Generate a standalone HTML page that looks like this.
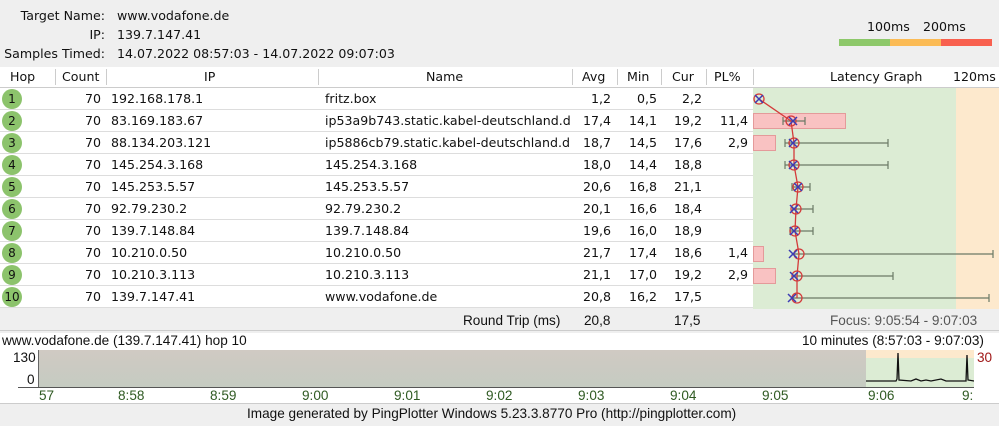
<!DOCTYPE html>
<html><head><meta charset="utf-8"><style>
*{margin:0;padding:0;box-sizing:border-box}
body{width:999px;height:426px;background:#efefef;font-family:"DejaVu Sans",Verdana,sans-serif;font-size:12.6px;color:#111;position:relative;overflow:hidden}
.a{position:absolute;white-space:nowrap}
.r{text-align:right}
.hdr{position:absolute;left:0;top:67px;width:999px;height:21px;background:#fff;border-bottom:1px solid #ccc}
.row{position:absolute;left:0;width:753px;height:22px;background:#fff;border-bottom:1px solid #ddd}
.row span{position:absolute;top:3px;white-space:nowrap}
.c{position:absolute;left:2px;top:1px;width:20px;height:20px;border-radius:50%;background:#8cc36c;text-align:center;line-height:20px;font-size:12px}
.n{font-family:"Liberation Sans",sans-serif;font-size:14px;transform:scaleX(.97);transform-origin:left}
</style></head><body>
<div class="a r" style="left:0;width:105px;top:8px">Target Name:</div>
<div class="a" style="left:117px;top:8px">www.vodafone.de</div>
<div class="a r" style="left:0;width:105px;top:27px">IP:</div>
<div class="a" style="left:117px;top:27px">139.7.147.41</div>
<div class="a r" style="left:0;width:105px;top:46px">Samples Timed:</div>
<div class="a" style="left:117px;top:46px">14.07.2022 08:57:03 - 14.07.2022 09:07:03</div>
<div class="a" style="left:867px;top:19px">100ms</div>
<div class="a" style="left:923px;top:19px">200ms</div>
<div class="a" style="left:839px;top:39px;width:51px;height:7px;background:#8dc86a"></div>
<div class="a" style="left:890px;top:39px;width:51px;height:7px;background:#fbbb55"></div>
<div class="a" style="left:941px;top:39px;width:51px;height:7px;background:#f8604f"></div>

<div class="hdr">
<span class="a" style="left:10px;top:2px">Hop</span>
<span class="a" style="left:62px;top:2px">Count</span>
<span class="a" style="left:204px;top:2px">IP</span>
<span class="a" style="left:426px;top:2px">Name</span>
<span class="a" style="left:582px;top:2px">Avg</span>
<span class="a" style="left:627px;top:2px">Min</span>
<span class="a" style="left:672px;top:2px">Cur</span>
<span class="a" style="left:714px;top:2px">PL%</span>
<span class="a" style="left:830px;top:2px">Latency Graph</span>
<span class="a" style="left:953px;top:2px">120ms</span>
<div class="a" style="left:55px;top:2px;width:1px;height:16px;background:#ccc"></div>
<div class="a" style="left:106px;top:2px;width:1px;height:16px;background:#ccc"></div>
<div class="a" style="left:318px;top:2px;width:1px;height:16px;background:#ccc"></div>
<div class="a" style="left:572px;top:2px;width:1px;height:16px;background:#ccc"></div>
<div class="a" style="left:617px;top:2px;width:1px;height:16px;background:#ccc"></div>
<div class="a" style="left:661px;top:2px;width:1px;height:16px;background:#ccc"></div>
<div class="a" style="left:706px;top:2px;width:1px;height:16px;background:#ccc"></div>
<div class="a" style="left:753px;top:2px;width:1px;height:16px;background:#ccc"></div>
</div>

<div class="row" style="top:88px"><div class="c">1</div><span class="r" style="left:60px;width:41px">70</span><span style="left:111px">192.168.178.1</span><span style="left:325px">fritz.box</span><span class="r" style="left:573px;width:38px">1,2</span><span class="r" style="left:617px;width:40px">0,5</span><span class="r" style="left:661px;width:41px">2,2</span></div>
<div class="row" style="top:110px"><div class="c">2</div><span class="r" style="left:60px;width:41px">70</span><span style="left:111px">83.169.183.67</span><span style="left:325px">ip53a9b743.static.kabel-deutschland.d</span><span class="r" style="left:573px;width:38px">17,4</span><span class="r" style="left:617px;width:40px">14,1</span><span class="r" style="left:661px;width:41px">19,2</span><span class="r" style="left:706px;width:42px">11,4</span></div>
<div class="row" style="top:132px"><div class="c">3</div><span class="r" style="left:60px;width:41px">70</span><span style="left:111px">88.134.203.121</span><span style="left:325px">ip5886cb79.static.kabel-deutschland.d</span><span class="r" style="left:573px;width:38px">18,7</span><span class="r" style="left:617px;width:40px">14,5</span><span class="r" style="left:661px;width:41px">17,6</span><span class="r" style="left:706px;width:42px">2,9</span></div>
<div class="row" style="top:154px"><div class="c">4</div><span class="r" style="left:60px;width:41px">70</span><span style="left:111px">145.254.3.168</span><span style="left:325px">145.254.3.168</span><span class="r" style="left:573px;width:38px">18,0</span><span class="r" style="left:617px;width:40px">14,4</span><span class="r" style="left:661px;width:41px">18,8</span></div>
<div class="row" style="top:176px"><div class="c">5</div><span class="r" style="left:60px;width:41px">70</span><span style="left:111px">145.253.5.57</span><span style="left:325px">145.253.5.57</span><span class="r" style="left:573px;width:38px">20,6</span><span class="r" style="left:617px;width:40px">16,8</span><span class="r" style="left:661px;width:41px">21,1</span></div>
<div class="row" style="top:198px"><div class="c">6</div><span class="r" style="left:60px;width:41px">70</span><span style="left:111px">92.79.230.2</span><span style="left:325px">92.79.230.2</span><span class="r" style="left:573px;width:38px">20,1</span><span class="r" style="left:617px;width:40px">16,6</span><span class="r" style="left:661px;width:41px">18,4</span></div>
<div class="row" style="top:220px"><div class="c">7</div><span class="r" style="left:60px;width:41px">70</span><span style="left:111px">139.7.148.84</span><span style="left:325px">139.7.148.84</span><span class="r" style="left:573px;width:38px">19,6</span><span class="r" style="left:617px;width:40px">16,0</span><span class="r" style="left:661px;width:41px">18,9</span></div>
<div class="row" style="top:242px"><div class="c">8</div><span class="r" style="left:60px;width:41px">70</span><span style="left:111px">10.210.0.50</span><span style="left:325px">10.210.0.50</span><span class="r" style="left:573px;width:38px">21,7</span><span class="r" style="left:617px;width:40px">17,4</span><span class="r" style="left:661px;width:41px">18,6</span><span class="r" style="left:706px;width:42px">1,4</span></div>
<div class="row" style="top:264px"><div class="c">9</div><span class="r" style="left:60px;width:41px">70</span><span style="left:111px">10.210.3.113</span><span style="left:325px">10.210.3.113</span><span class="r" style="left:573px;width:38px">21,1</span><span class="r" style="left:617px;width:40px">17,0</span><span class="r" style="left:661px;width:41px">19,2</span><span class="r" style="left:706px;width:42px">2,9</span></div>
<div class="row" style="top:286px"><div class="c">10</div><span class="r" style="left:60px;width:41px">70</span><span style="left:111px">139.7.147.41</span><span style="left:325px">www.vodafone.de</span><span class="r" style="left:573px;width:38px">20,8</span><span class="r" style="left:617px;width:40px">16,2</span><span class="r" style="left:661px;width:41px">17,5</span></div>

<svg class="a" style="left:753px;top:88px" width="246" height="221">
<rect x="0" y="0" width="203" height="221" fill="#dcecd4"/>
<rect x="203" y="0" width="43" height="221" fill="#fde9cd"/>
<g fill="#f9c2c2" stroke="#e49a9a">
<rect x="0.5" y="25.5" width="92" height="15"/>
<rect x="0.5" y="47.5" width="22" height="15"/>
<rect x="0.5" y="158.5" width="10" height="15"/>
<rect x="0.5" y="180.5" width="22" height="15"/>
</g>
<g stroke="#6b7a66" stroke-width="1.2" fill="none">
<path d="M30 33H52M52 29v8M30 29v8"/>
<path d="M32 55H135M135 51v8M32 51v8"/>
<path d="M32 77H135M135 73v8M32 73v8"/>
<path d="M39 99H57M57 95v8M39 95v8"/>
<path d="M39 121H60M60 117v8"/>
<path d="M37 143H60M60 139v8M37 139v8"/>
<path d="M40 166H240M240 162v8"/>
<path d="M40 188H140M140 184v8"/>
<path d="M40 210H236M236 206v8"/>
</g>
<polyline fill="none" stroke="#d43a3a" stroke-width="1.3" points="6,11 38,33 41,55 41,77 45,99 43,121 42,143 46,166 44,188 44,210"/>
<g fill="none" stroke="#d43a3a" stroke-width="1.3">
<circle cx="6" cy="11" r="5"/><circle cx="38" cy="33" r="5"/><circle cx="41" cy="55" r="5"/><circle cx="41" cy="77" r="5"/><circle cx="45" cy="99" r="5"/><circle cx="43" cy="121" r="5"/><circle cx="42" cy="143" r="5"/><circle cx="46" cy="166" r="5"/><circle cx="44" cy="188" r="5"/><circle cx="44" cy="210" r="5"/>
</g>
<g stroke="#3c3cb4" stroke-width="1.5">
<path d="M2 7l8 8M10 7l-8 8"/>
<path d="M36 29l8 8M44 29l-8 8"/>
<path d="M36 51l8 8M44 51l-8 8"/>
<path d="M36 73l8 8M44 73l-8 8"/>
<path d="M41 95l8 8M49 95l-8 8"/>
<path d="M37 117l8 8M45 117l-8 8"/>
<path d="M37 139l8 8M45 139l-8 8"/>
<path d="M36 162l8 8M44 162l-8 8"/>
<path d="M37 184l8 8M45 184l-8 8"/>
<path d="M35 206l8 8M43 206l-8 8"/>
</g>
</svg>

<div class="a" style="left:0;top:309px;width:999px;height:22px;background:#efefef;border-bottom:1px solid #ccc"></div>
<div class="a n" style="left:463px;top:312px">Round Trip (ms)</div>
<div class="a n" style="left:584px;top:312px">20,8</div>
<div class="a n" style="left:674px;top:312px">17,5</div>
<div class="a n" style="left:830px;top:312px;color:#555">Focus: 9:05:54 - 9:07:03</div>

<div class="a" style="left:0;top:333px;width:999px;height:70px;background:#fff"></div>
<div class="a n" style="left:2px;top:332px">www.vodafone.de (139.7.147.41) hop 10</div>
<div class="a n" style="left:802px;top:332px">10 minutes (8:57:03 - 9:07:03)</div>
<div class="a n" style="left:13px;top:349px">130</div>
<div class="a n" style="left:27px;top:371px">0</div>
<div class="a" style="left:38px;top:350px;width:828px;height:37px;background:linear-gradient(#d0cac3,#c5cbc1)"></div>
<div class="a" style="left:38px;top:350px;width:1px;height:38px;background:#666"></div>
<div class="a" style="left:866px;top:350px;width:108px;height:8px;background:#fde9cd"></div>
<div class="a" style="left:866px;top:358px;width:108px;height:29px;background:#dcecd4"></div>
<svg class="a" style="left:866px;top:350px" width="108" height="38"><polyline fill="none" stroke="#111" stroke-width="1.3" points="0,31 30,31 31,29 32,3 33,30 45,31 50,29 55,31 60,30 65,31 75,29 80,31 100,31 101,5 102,30 108,31"/></svg>
<div class="a n" style="left:977px;top:349px;color:#a01818">30</div>
<div class="a" style="left:18px;top:387px;width:956px;height:1px;background:#555"></div>
<div class="a n" style="left:39px;top:387px;color:#2f5a22">57</div>
<div class="a n" style="left:118px;top:387px;color:#2f5a22">8:58</div>
<div class="a n" style="left:210px;top:387px;color:#2f5a22">8:59</div>
<div class="a n" style="left:302px;top:387px;color:#2f5a22">9:00</div>
<div class="a n" style="left:394px;top:387px;color:#2f5a22">9:01</div>
<div class="a n" style="left:486px;top:387px;color:#2f5a22">9:02</div>
<div class="a n" style="left:578px;top:387px;color:#2f5a22">9:03</div>
<div class="a n" style="left:670px;top:387px;color:#2f5a22">9:04</div>
<div class="a n" style="left:762px;top:387px;color:#2f5a22">9:05</div>
<div class="a n" style="left:868px;top:387px;color:#2f5a22">9:06</div>
<div class="a n" style="left:962px;top:387px;color:#2f5a22">9:</div>
<div class="a" style="left:0;top:403px;width:999px;height:1px;background:#ccc"></div>
<div class="a n" style="left:247px;top:405px">Image generated by PingPlotter Windows 5.23.3.8770 Pro (http://pingplotter.com)</div>
</body></html>
